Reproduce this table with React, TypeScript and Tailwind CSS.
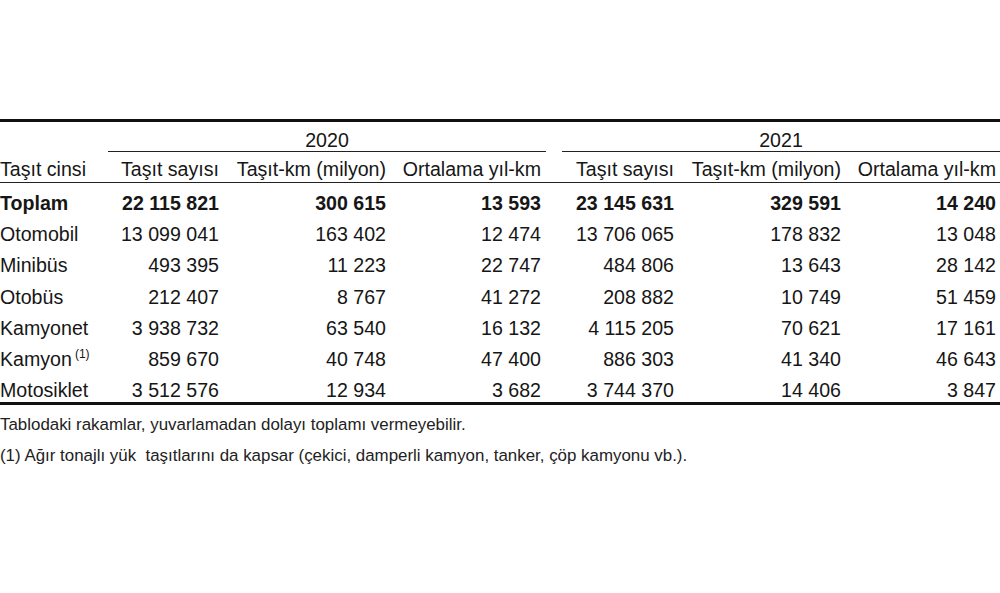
import React from "react";

type Row = { name: string; sup?: boolean; bold?: boolean; v: string[] };

const rows: Row[] = [
  { name: "Toplam", bold: true, v: ["22 115 821", "300 615", "13 593", "23 145 631", "329 591", "14 240"] },
  { name: "Otomobil", v: ["13 099 041", "163 402", "12 474", "13 706 065", "178 832", "13 048"] },
  { name: "Minibüs", v: ["493 395", "11 223", "22 747", "484 806", "13 643", "28 142"] },
  { name: "Otobüs", v: ["212 407", "8 767", "41 272", "208 882", "10 749", "51 459"] },
  { name: "Kamyonet", v: ["3 938 732", "63 540", "16 132", "4 115 205", "70 621", "17 161"] },
  { name: "Kamyon", sup: true, v: ["859 670", "40 748", "47 400", "886 303", "41 340", "46 643"] },
  { name: "Motosiklet", v: ["3 512 576", "12 934", "3 682", "3 744 370", "14 406", "3 847"] },
];

const cols = "grid grid-cols-[108px_116px_167px_155px_16px_117px_167px_154px]";
const headers = ["Taşıt sayısı", "Taşıt-km (milyon)", "Ortalama yıl-km"];

export default function App() {
  return (
    <div
      className="w-[1000px] h-[593px] bg-white text-[#161616] pt-[119px] overflow-hidden"
      style={{ fontFamily: '"Liberation Sans", Arial, sans-serif' }}
    >
      <div className="border-t-[3px] border-[#111]">
        {/* year row */}
        <div className={`${cols} h-[30px] text-[19.6px] leading-[22px]`}>
          <div />
          <div className="col-span-3 border-b border-[#222] flex items-end justify-center">2020</div>
          <div />
          <div className="col-span-3 border-b border-[#222] flex items-end justify-center">2021</div>
        </div>
        {/* header row */}
        <div className={`${cols} h-[31px] text-[19.6px] leading-[22px] border-b border-[#222] whitespace-nowrap`}>
          <div className="flex items-end pb-[2px]">Taşıt cinsi</div>
          {headers.map((h) => (
            <div key={"a" + h} className="flex items-end justify-end pb-[2px] pr-[5px]">{h}</div>
          ))}
          <div />
          {headers.map((h, i) => (
            <div key={"b" + h} className={`flex items-end justify-end pb-[2px] ${i === 2 ? "pr-[4px]" : "pr-[5px]"}`}>{h}</div>
          ))}
        </div>
        {/* data rows */}
        {rows.map((r) => (
          <div
            key={r.name}
            className={`${cols} h-[31.3px] text-[19.6px] leading-[22px] whitespace-nowrap ${r.bold ? "font-bold" : ""}`}
          >
            <div className="flex items-center pt-[8px]">
              <span>
                {r.name}
                {r.sup && <sup className="text-[12px] ml-[3px] -top-[8px]">(1)</sup>}
              </span>
            </div>
            {r.v.slice(0, 3).map((x, i) => (
              <div key={"a" + i} className="flex items-center justify-end pt-[8px] pr-[5px]">{x}</div>
            ))}
            <div />
            {r.v.slice(3).map((x, i) => (
              <div key={"b" + i} className={`flex items-center justify-end pt-[8px] ${i === 2 ? "pr-[4px]" : "pr-[5px]"}`}>{x}</div>
            ))}
          </div>
        ))}
        <div className="border-t-[3px] border-[#111]" />
      </div>
      <div className="mt-[4px] text-[16.9px] text-[#222] leading-[31px] whitespace-pre">
        <div>Tablodaki rakamlar, yuvarlamadan dolayı toplamı vermeyebilir.</div>
        <div>(1) Ağır tonajlı yük  taşıtlarını da kapsar (çekici, damperli kamyon, tanker, çöp kamyonu vb.).</div>
      </div>
    </div>
  );
}
